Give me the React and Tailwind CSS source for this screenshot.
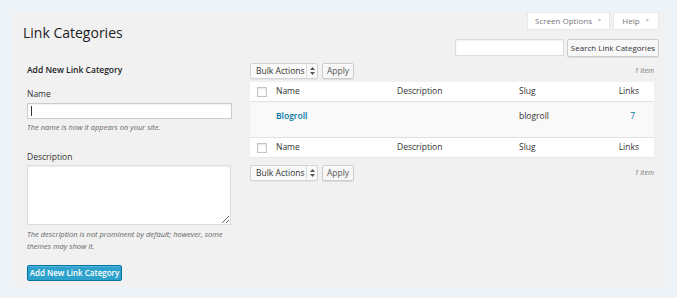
import React from "react";

const font = { fontFamily: "'Open Sans', 'Noto Sans', sans-serif" };

const Checkbox = () => (
  <span className="block w-[10px] h-[10px] bg-white border border-[#c4c4c4] shadow-[inset_0_1px_2px_rgba(0,0,0,0.1)]" />
);

const BulkActions = () => (
  <div className="flex items-center gap-[4px]">
    <div className="flex items-center h-[16px] w-[68px] bg-[#f9f9f9] border border-[#d4d4d4] rounded-[2px] shadow-[0_1px_1px_rgba(0,0,0,0.05)]">
      <span className="flex-1 pl-[5px] text-[8.5px] text-[#333] leading-none">Bulk Actions</span>
      <span className="flex items-center justify-center w-[11px] h-full border-l border-[#ddd]">
        <svg width="5" height="8" viewBox="0 0 5 8">
          <path d="M2.5 0 L5 3 L0 3 Z M2.5 8 L5 5 L0 5 Z" fill="#555" />
        </svg>
      </span>
    </div>
    <button className="h-[16px] w-[32px] bg-[#f7f7f7] border border-[#ccc] rounded-[2px] text-[8.5px] text-[#555] leading-none shadow-[0_1px_0_#fff_inset,0_1px_0_rgba(0,0,0,0.08)]">
      Apply
    </button>
  </div>
);

const TableHead = ({ top }) => (
  <div
    className={`grid grid-cols-[26px_121px_122px_81px_54px] items-center h-[20px] bg-white text-[8.5px] text-[#333] ${
      top ? "border-b" : "border-t"
    } border-[#e1e1e1]`}
  >
    <div className="pl-[7px]">
      <Checkbox />
    </div>
    <div>Name</div>
    <div>Description</div>
    <div>Slug</div>
    <div className="text-right pr-[15px]">Links</div>
  </div>
);

export default function App() {
  return (
    <div className="w-[677px] h-[298px] bg-[#eef3f7] pt-[13px] pl-[12px]" style={font}>
      <div className="w-[653px] h-[273px] bg-[#f1f1f1] px-[11px]">
        {/* header */}
        <div className="flex justify-between items-start">
          <h1 className="pt-[11px] text-[14px] leading-[18px] text-[#222]">Link Categories</h1>
          <div className="flex gap-[5px] -mr-[4px]">
            <button className="h-[16px] w-[81px] bg-white text-[8px] text-[#777] flex items-center justify-center gap-[5px] shadow-[0_0_0_1px_rgba(0,0,0,0.04)]">
              Screen Options <span className="text-[5px] text-[#bbb]">▼</span>
            </button>
            <button className="h-[16px] w-[44px] bg-white text-[8px] text-[#777] flex items-center justify-center gap-[5px] shadow-[0_0_0_1px_rgba(0,0,0,0.04)]">
              Help <span className="text-[5px] text-[#bbb]">▼</span>
            </button>
          </div>
        </div>

        {/* search */}
        <div className="flex justify-end gap-[3px] mt-[-3px] -mr-[5px]">
          <div className="w-[109px] h-[17px] bg-white border border-[#ddd] shadow-[inset_0_1px_2px_rgba(0,0,0,0.07)]" />
          <button className="h-[18px] w-[92px] bg-[#f7f7f7] border border-[#ccc] rounded-[2px] text-[8px] text-[#333] leading-none shadow-[0_1px_0_rgba(0,0,0,0.08)]">
            Search Link Categories
          </button>
        </div>

        {/* columns */}
        <div className="flex gap-[18px] mt-[4px]">
          {/* left */}
          <div className="w-[205px] ml-[4px] text-[#333]">
            <h3 className="mt-[3px] text-[8.5px] font-semibold leading-[12px] text-[#222]">Add New Link Category</h3>
            <div className="mt-[12px] text-[8.5px] leading-[12px]">Name</div>
            <div className="mt-[3px] h-[16px] bg-white border border-[#ccc] shadow-[inset_0_1px_2px_rgba(0,0,0,0.07)] flex items-center">
              <span className="block ml-[3px] w-px h-[10px] bg-[#333]" />
            </div>
            <p className="mt-[2px] text-[7.5px] italic text-[#666] leading-[12px]">
              The name is how it appears on your site.
            </p>
            <div className="mt-[18px] text-[8.5px] leading-[12px]">Description</div>
            <textarea className="mt-[2px] block w-[204px] h-[60px] bg-white border border-[#ddd] shadow-[inset_0_1px_2px_rgba(0,0,0,0.07)] outline-none" />
            <p className="mt-[3px] text-[7.5px] italic text-[#666] leading-[12px]">
              The description is not prominent by default; however, some themes may show it.
            </p>
            <button className="mt-[13px] h-[16px] w-[95px] bg-[#2ea2cc] border border-[#0074a2] rounded-[2px] text-[8px] font-semibold text-white leading-none shadow-[inset_0_1px_0_rgba(120,200,230,0.5)]">
              Add New Link Category
            </button>
          </div>

          {/* right */}
          <div className="w-[404px]">
            <div className="flex justify-between items-center mt-[2px]">
              <BulkActions />
              <span className="text-[7px] italic text-[#777]">1 item</span>
            </div>
            <div className="mt-[3px] shadow-[0_1px_1px_rgba(0,0,0,0.04)]">
              <TableHead top />
              <div className="grid grid-cols-[26px_121px_122px_81px_54px] h-[35px] bg-[#f9f9f9] text-[8.5px] text-[#333] pt-[8px]">
                <div />
                <div className="font-semibold text-[#0074a2]">Blogroll</div>
                <div />
                <div>blogroll</div>
                <div className="text-right pr-[19px] text-[#0074a2]">7</div>
              </div>
              <TableHead />
            </div>
            <div className="flex justify-between items-center mt-[8px]">
              <BulkActions />
              <span className="text-[7px] italic text-[#777]">1 item</span>
            </div>
          </div>
        </div>
      </div>
    </div>
  );
}
